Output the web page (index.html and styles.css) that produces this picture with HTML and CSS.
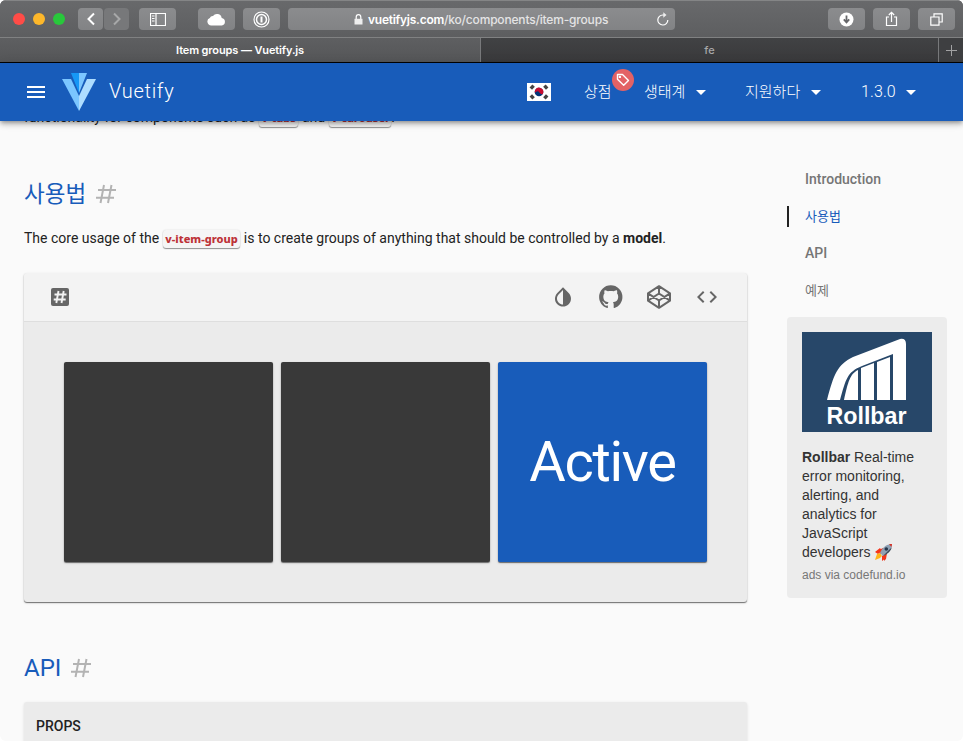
FILE: index.html
```html
<!DOCTYPE html>
<html lang="ko">
<head>
<meta charset="utf-8">
<title>Item groups — Vuetify.js</title>
<link rel="stylesheet" href="styles.css">
</head>
<body>
<div class="window">
  <header class="chrome">
    <div class="toolbar">
      <span class="light red"></span><span class="light yellow"></span><span class="light green"></span>
      <span class="btn back"><svg width="10" height="14" viewBox="0 0 10 14"><path d="M8 1.5 2.5 7 8 12.500" class="line w2"/></svg></span>
      <span class="btn forward"><svg width="10" height="14" viewBox="0 0 10 14"><path d="M2 1.500 7.500 7 2 12.500" class="line dim"/></svg></span>
      <span class="btn wide sidebar-btn"><svg width="16" height="13" viewBox="0 0 16 13"><path d="M.5.5h15v12H.5zM6 .5v12M2 3h2.500M2 5.500h2.500M2 8h2.500" class="line thin"/></svg></span>
      <span class="btn wide cloud-btn"><svg width="19" height="13" viewBox="0 0 19 13"><path fill="#fff" d="M4.200 12.500A3.900 3.900 0 0 1 2.800 5 3.200 3.200 0 0 1 6 3 4.800 4.800 0 0 1 14.700 5a3.800 3.800 0 0 1 .1 7.500z"/></svg></span>
      <span class="btn wide key-btn"><svg width="17" height="17" viewBox="0 0 17 17"><circle cx="8.500" cy="8.500" r="7.500" class="line thin"/><circle cx="8.500" cy="8.500" r="5" class="line"/><path d="M8.500 5.500v6" class="line w2"/></svg></span>
      <div class="address">
        <svg width="9" height="11" viewBox="0 0 9 11"><path fill="#eee" d="M.5 4.800h8v5.700h-8z"/><path d="M2.200 5V3a2.300 2.300 0 0 1 4.600 0v2" class="line thin"/></svg>
        <span class="host">vuetifyjs.com<span class="path">/ko/components/item-groups</span></span>
        <svg class="reload" width="14" height="15" viewBox="0 0 14 15"><path d="M11.800 8A5 5 0 1 1 7 3h2" class="line thin"/><path d="M7.300.3 10.500 3 7.300 5.800z" fill="#eee"/></svg>
      </div>
      <span class="btn wide download-btn"><svg width="15" height="15" viewBox="0 0 15 15"><circle cx="7.500" cy="7.500" r="7" fill="#fff"/><path d="M7.500 3.500v6M4.800 7.300l2.700 3 2.700-3" fill="none" stroke="#66676a" stroke-width="1.800"/></svg></span>
      <span class="btn wide share-btn"><svg width="13" height="16" viewBox="0 0 13 16"><path d="M4 6H1.500v8.500h10V6H9M6.500 11V1.500M3.800 4l2.700-2.700L9.200 4" class="line thin"/></svg></span>
      <span class="btn wide windows-btn"><svg width="13" height="13" viewBox="0 0 13 13"><path d="M.8 4h8.200v8.200H.8zM4 4V.8h8.200V9H9" class="line thin"/></svg></span>
    </div>
    <div class="tabs">
      <div class="tab current">Item groups — Vuetify.js</div>
      <div class="tab other">fe</div>
      <div class="new-tab"><svg width="11" height="11" viewBox="0 0 11 11"><path d="M5.500 0v11M0 5.500h11" fill="none" stroke="#a2a2a3"/></svg></div>
    </div>
  </header>

  <nav class="appbar">
    <svg class="burger" width="18" height="12" viewBox="0 0 18 12"><path fill="#fff" d="M0 0h18v2H0zm0 5h18v2H0zm0 5h18v2H0z"/></svg>
    <svg class="logo" width="34" height="38" viewBox="0 0 34 38"><path fill="#7bc6ff" d="M17 0h8l-8 20z"/><path fill="#1697f6" d="M9 0h8v20z"/><path fill="#7bc6ff" d="M0 6h9l8 17v15z"/><path fill="#aeddff" d="M34 6h-9l-8 17v15z"/></svg>
    <span class="brand">Vuetify</span>
    <svg class="flag" width="24" height="18" viewBox="0 0 24 18"><path fill="#fff" d="M0 0h24v18H0z"/><circle cx="12" cy="9" r="4.300" fill="#003478"/><path fill="#c60c30" d="M8.300 6.800A4.300 4.300 0 0 1 15.800 11C14.700 11.800 12.800 10.500 12 9S9 8.300 7.900 10A4.300 4.300 0 0 1 8.300 6.800z"/><path d="m3.800 5.700 2.800-3M17.400 2.700l2.800 3M3.800 12.300l2.800 3M17.400 15.300l2.800-3" stroke="#444" stroke-width="3.400"/></svg>
    <span class="item store"><span class="ko">상점</span><span class="badge"><svg width="14" height="14" viewBox="0 0 14 14"><path d="M1.500 1.500h5l6 6-4.800 4.800-6.200-6z" fill="none" stroke="#fff" stroke-width="1.400" stroke-linejoin="round"/><circle cx="3.900" cy="3.900" r="1.200" fill="#fff"/></svg></span></span>
    <span class="item eco"><span class="ko">생태계</span><i class="caret"></i></span>
    <span class="item support"><span class="ko">지원하다</span><i class="caret"></i></span>
    <span class="item version">1.3.0<i class="caret"></i></span>
  </nav>

  <div class="content">
    <main>
      <p class="intro">functionality for components such as <code>v-tabs</code> and <code>v-carousel</code>.</p>
      <h2 class="usage"><span class="title">사용법</span> <svg class="hash" width="20" height="20" viewBox="0 0 20 20"><path d="M8 1 4.500 19M15.500 1 12 19M2 6h18M0 13.800h18"/></svg></h2>
      <p class="lead">The core usage of the <code>v-item-group</code> is to create groups of anything that should be controlled by a <b>model</b>.</p>
      <section class="example">
        <div class="actions">
          <svg class="pound" width="24" height="24" viewBox="0 0 24 24"><rect x="3" y="3" width="18" height="18" rx="2"/><path d="M10.500 6 8.300 18M15.700 6l-2.200 12M6.500 9.500h12M5.700 14.500h12" fill="none" stroke="#f3f3f3" stroke-width="1.900"/></svg>
          <svg class="icon" width="24" height="24" viewBox="0 0 24 24"><path d="M12,19.580C10.400,19.580 8.890,18.960 7.760,17.830C6.620,16.690 6,15.190 6,13.580C6,12 6.620,10.470 7.760,9.340L12,5.100M17.660,7.930L12,2.270L6.340,7.930C3.220,11.050 3.220,16.120 6.340,19.240C7.900,20.800 9.950,21.580 12,21.580C14.050,21.580 16.100,20.800 17.660,19.240C20.780,16.120 20.780,11.050 17.660,7.930Z"/></svg>
          <svg class="icon" width="24" height="24" viewBox="1.900 1.700 20.600 20.600"><path d="M12,2A10,10 0 0,0 2,12C2,16.420 4.870,20.170 8.840,21.500C9.340,21.580 9.500,21.270 9.500,21C9.500,20.770 9.500,20.140 9.500,19.310C6.730,19.910 6.140,17.970 6.140,17.970C5.680,16.810 5.030,16.500 5.030,16.500C4.120,15.880 5.100,15.900 5.100,15.900C6.100,15.970 6.630,16.930 6.630,16.930C7.500,18.450 8.970,18 9.540,17.760C9.630,17.110 9.890,16.670 10.170,16.420C7.950,16.170 5.620,15.310 5.620,11.500C5.620,10.390 6,9.500 6.650,8.790C6.550,8.540 6.200,7.500 6.750,6.150C6.750,6.150 7.590,5.880 9.500,7.170C10.290,6.950 11.150,6.840 12,6.840C12.850,6.840 13.710,6.950 14.500,7.170C16.410,5.880 17.250,6.150 17.250,6.150C17.800,7.500 17.450,8.540 17.350,8.790C18,9.500 18.380,10.390 18.380,11.500C18.380,15.320 16.040,16.160 13.810,16.410C14.170,16.720 14.500,17.330 14.500,18.260C14.500,19.600 14.500,20.680 14.500,21C14.500,21.270 14.660,21.590 15.170,21.500C19.140,20.160 22,16.420 22,12A10,10 0 0,0 12,2Z"/></svg>
          <svg class="icon" width="24" height="24" viewBox="0 0 24 24"><path d="M12 1.200 23 8.300v7.400l-11 7.100L1 15.700V8.300zM12 1.200v7.300M12 15.500v7.300M1 8.300l11 7.200 11-7.200M1 15.700l11-7.200 11 7.200" fill="none" stroke="#666" stroke-width="2" stroke-linejoin="round"/></svg>
          <svg class="icon" width="24" height="24" viewBox="0 0 24 24"><path d="M14.600,16.600L19.200,12L14.600,7.400L16,6L22,12L16,18L14.600,16.600M9.400,16.600L4.800,12L9.400,7.400L8,6L2,12L8,18L9.400,16.600Z"/></svg>
        </div>
        <div class="tiles">
          <div class="tile"></div>
          <div class="tile"></div>
          <div class="tile active">Active</div>
        </div>
      </section>
      <h2 class="api">API <svg class="hash" width="20" height="20" viewBox="0 0 20 20"><path d="M8 1 4.500 19M15.500 1 12 19M2 6h18M0 13.800h18"/></svg></h2>
      <section class="props">PROPS</section>
    </main>
    <aside>
      <ul class="toc">
        <li>Introduction</li>
        <li class="here ko-item">사용법</li>
        <li>API</li>
        <li class="ko-item">예제</li>
      </ul>
      <div class="ad">
        <svg class="ad-logo" width="130" height="100" viewBox="0 0 130 100"><path fill="#274769" d="M0 0h130v100H0z"/><path fill="#fff" d="M25 68C32 42 35 33 51 25L98 7q6-1 6 5v56H91V22L60 34C45 40 44 47 38 68z"/><path fill="#fff" d="M42 68C46 50 48 42 56 38v30zM59 36l13-5v37H59zM75 30l13-5v43H75z"/><text x="24.500" y="92" textLength="80" lengthAdjust="spacingAndGlyphs">Rollbar</text></svg>
        <p class="ad-text"><b>Rollbar</b> Real-time error monitoring, alerting, and analytics for JavaScript developers <svg class="rocket" width="19" height="18" viewBox="0 0 19 18"><path fill="#e33b20" d="m5 7 4-2 2 3-5 3zM10 12l3-2-1 6-2 2z"/><path fill="#f5351c" d="M1 9 6 5 8 8 4 11zM8 13l3-2 1 4-4 3z"/><path fill="#ffb51c" d="m1 17 2-6 3-1 2 3-2 2z"/><path fill="#8fa1b4" d="M6 10C8 5 12 1 18 1c0 5-4 9-9 12z"/><path fill="#d92e22" d="M15 1h3l-.5 3z"/><path fill="#3c4959" d="m9 13 9-9c-1 4-4 7-9 9z"/><circle cx="12.300" cy="6" r="1.800" fill="#25364b"/></svg></p>
        <p class="via">ads via codefund.io</p>
      </div>
    </aside>
  </div>
</div>
</body>
</html>
```
FILE: styles.css
```css
* { box-sizing: border-box; }
body { margin: 0; background: #fff; font-family: Roboto, "Noto Sans CJK KR", sans-serif; }
svg { display: block; flex: none; }
p, h2, ul { margin: 0; padding: 0; }

.window { width: 963px; height: 741px; overflow: hidden; border-radius: 6px; background: #fafafa; }
.chrome { height: 63px; border-bottom: 1px solid #000; font-family: Inter, sans-serif; background: #5b5c5e; }
.toolbar { height: 38px; display: flex; align-items: center; padding: 0 8px 0 13px; border-top: 1px solid #848586; border-bottom: 1px solid #808182; background: linear-gradient(#68696b, #5d5e60); }
.light { width: 12px; height: 12px; border-radius: 50%; margin-right: 8px; }
.red { background: #ff4c47; }
.yellow { background: #fdb72a; }
.green { background: #28c83b; }
.btn { width: 25px; height: 22px; border-radius: 4px; display: flex; align-items: center; justify-content: center; background: linear-gradient(#8b8c8e, #828385); flex: none; }
.wide { width: 37px; }
.back { margin-left: 5px; }
.forward { margin-left: 1px; background: #77787a; }
.sidebar-btn { margin-left: 10px; }
.cloud-btn { margin-left: 22px; }
.key-btn { margin: 0 8px; }
.share-btn { margin: 0 8px; }
.download-btn { margin-left: auto; }
.line { fill: none; stroke: #fff; stroke-width: 1.5; }
.w2 { stroke-width: 2; }
.thin { stroke-width: 1.2; }
.dim { stroke: #a7a8a9; stroke-width: 2; }
.address { width: 387px; height: 22px; border-radius: 4px; background: linear-gradient(#8b8c8e, #828385); display: flex; align-items: center; padding: 0 5px 0 66px; }
.host { margin-left: 5px; font-size: 12px; font-weight: 600; color: #fff; letter-spacing: -.25px; white-space: nowrap; }
.path { color: #e4e4e5; font-weight: 500; letter-spacing: -.18px; }
.reload { margin-left: auto; }
.tabs { height: 24px; display: flex; font-size: 11px; line-height: 24px; text-align: center; }
.tab.current { width: 480px; background: linear-gradient(#5e5f61, #555658); color: #fff; font-weight: 600; letter-spacing: -.12px; }
.tab.other { width: 458px; border-left: 1px solid #78797b; background: linear-gradient(#414244, #39393b); color: #a7a7a8; font-weight: 500; }
.new-tab { width: 25px; border-left: 1px solid #78797b; background: #3e3f41; display: flex; align-items: center; justify-content: center; }

.appbar { position: relative; z-index: 1; height: 58px; background: #185cba; box-shadow: 0 2px 4px -1px rgba(0,0,0,.3), 0 4px 5px rgba(0,0,0,.14), 0 1px 10px rgba(0,0,0,.12); display: flex; align-items: center; padding-left: 27px; color: #fff; font-weight: 300; font-size: 15px; white-space: nowrap; }
.logo { margin-left: 17px; }
.brand { margin-left: 13px; width: 66px; margin-top: -2px; font-size: 20px; letter-spacing: .7px; }
.flag { margin-left: 352px; }
.item { display: flex; align-items: center; position: relative; }
.ko { padding-bottom: 3px; }
.store { width: 60px; margin-left: 33px; }
.eco { width: 101px; }
.support { width: 116px; }
.version { font-size: 16px; letter-spacing: .1px; margin-top: -1px; }
.caret { border: 5px solid transparent; border-top-color: #fff; border-bottom: 0; margin-left: 11px; margin-top: 1px; }
.version .caret { margin-top: 2px; margin-left: 10px; }
.badge { position: absolute; left: 28px; top: -11px; width: 22px; height: 22px; border-radius: 50%; background: #e36265; display: flex; align-items: center; justify-content: center; }

.content { display: flex; height: 620px; overflow: hidden; }
main { width: 723px; margin-left: 24px; color: #222; font-size: 14px; }
.intro { margin-top: -14px; height: 21px; line-height: 21px; }
.lead { height: 21px; line-height: 21px; margin-top: 19px; white-space: nowrap; }
code { display: inline-block; padding: 0 2.7px; border-radius: 3px; background: #f5f5f5; box-shadow: 0 1px 1px rgba(0,0,0,.4), 0 0 2px rgba(0,0,0,.12); color: #bd3238; font: 800 11px/18px "Noto Sans", sans-serif; }
h2 { display: flex; align-items: center; height: 32px; font-size: 24px; font-weight: 400; color: #185cba; }
.usage { margin-top: 49px; }
.title { font-size: 22.5px; padding-bottom: 3px; }
.hash { margin-left: 10px; fill: none; stroke: #b3b3b3; stroke-width: 2; }
.usage .hash { margin-top: 1px; }
.example { margin-top: 24px; height: 329px; border-radius: 3px; background: #ebebeb; box-shadow: 0 1px 1px rgba(0,0,0,.5), 0 1px 3px rgba(0,0,0,.12); }
.actions { height: 49px; border-bottom: 1px solid #dedede; border-radius: 3px 3px 0 0; background: #f3f3f3; display: flex; align-items: center; padding: 0 28px 0 24px; gap: 24px; fill: #666; }
.pound { margin-right: auto; }
.tiles { display: grid; grid-template-columns: repeat(3, 1fr); gap: 8px; padding: 40px; }
.tile { height: 200px; border-radius: 2px; background: #393939; box-shadow: 0 1px 1px rgba(0,0,0,.5), 0 1px 3px rgba(0,0,0,.12); }
.active { background: #185cba; color: #fff; font-size: 56px; line-height: 200px; text-align: center; letter-spacing: -1.3px; }
.api { margin-top: 50px; }
.props { margin-top: 18px; height: 48px; border-radius: 3px; background: #ebebeb; padding-left: 12px; line-height: 49px; font-weight: 500; box-shadow: 0 1px 3px rgba(0,0,0,.12); }

aside { width: 160px; margin-left: 40px; padding-top: 40px; }
.toc { list-style: none; padding-top: 8px; font-size: 14px; font-weight: 500; color: #757575; }
.toc li { height: 21px; line-height: 21px; margin-bottom: 16px; padding-left: 16px; border-left: 2px solid transparent; }
.toc .here { border-color: #222; color: #185cba; }
.toc .ko-item { font-size: 13px; font-weight: 400; }
.toc li:last-child { margin-bottom: 0; }
.ad { margin-top: 16px; height: 281px; padding: 15px; border-radius: 4px; background: #ececec; font-family: "Liberation Sans", sans-serif; }
.ad-logo text { font: bold 24px "Liberation Sans", sans-serif; fill: #fff; }
.ad-text { margin-top: 16px; font-size: 14px; line-height: 19px; color: #333; }
.rocket { display: inline-block; vertical-align: -4px; }
.via { margin-top: 5px; font-size: 12px; line-height: 16px; color: #777; }
```
